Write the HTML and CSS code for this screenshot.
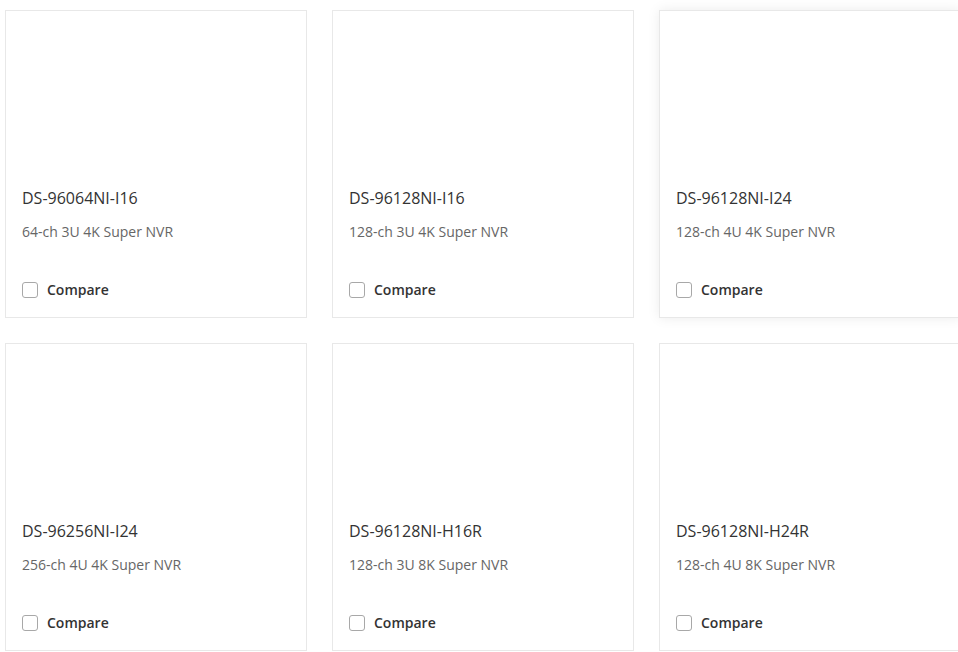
FILE: index.html
```html
<!DOCTYPE html>
<html lang="en">
<head>
  <meta charset="UTF-8" />
  <meta name="viewport" content="width=device-width, initial-scale=1.0" />
  <title>Network Video Recorders</title>
  <link rel="stylesheet" href="styles.css">
</head>
<body>

  <!-- Product list -->
  <section class="product-list">
    <div class="product-card">
      <div class="product-media"></div>
      <div class="product-body">
        <h3 class="product-name">DS-96064NI-I16</h3>
        <p class="product-desc">64-ch 3U 4K Super NVR</p>
        <label class="compare"><input type="checkbox"><span>Compare</span></label>
      </div>
    </div>

    <div class="product-card">
      <div class="product-media"></div>
      <div class="product-body">
        <h3 class="product-name">DS-96128NI-I16</h3>
        <p class="product-desc">128-ch 3U 4K Super NVR</p>
        <label class="compare"><input type="checkbox"><span>Compare</span></label>
      </div>
    </div>

    <div class="product-card is-hover">
      <div class="product-media"></div>
      <div class="product-body">
        <h3 class="product-name">DS-96128NI-I24</h3>
        <p class="product-desc">128-ch 4U 4K Super NVR</p>
        <label class="compare"><input type="checkbox"><span>Compare</span></label>
      </div>
    </div>

    <div class="product-card">
      <div class="product-media"></div>
      <div class="product-body">
        <h3 class="product-name">DS-96256NI-I24</h3>
        <p class="product-desc">256-ch 4U 4K Super NVR</p>
        <label class="compare"><input type="checkbox"><span>Compare</span></label>
      </div>
    </div>

    <div class="product-card">
      <div class="product-media"></div>
      <div class="product-body">
        <h3 class="product-name">DS-96128NI-H16R</h3>
        <p class="product-desc">128-ch 3U 8K Super NVR</p>
        <label class="compare"><input type="checkbox"><span>Compare</span></label>
      </div>
    </div>

    <div class="product-card">
      <div class="product-media"></div>
      <div class="product-body">
        <h3 class="product-name">DS-96128NI-H24R</h3>
        <p class="product-desc">128-ch 4U 8K Super NVR</p>
        <label class="compare"><input type="checkbox"><span>Compare</span></label>
      </div>
    </div>
  </section>

</body>
</html>
```

FILE: styles.css
```css
* {
  margin: 0;
  padding: 0;
  box-sizing: border-box;
}

body {
  background: #fff;
  color: #333;
  font-family: 'Open Sans', 'Liberation Sans', sans-serif;
  overflow: hidden;
}

/* ========== Product grid ========== */
.product-list {
  display: grid;
  grid-template-columns: repeat(3, 302px);
  grid-auto-rows: 308px;
  column-gap: 25px;
  row-gap: 25px;
  padding: 10px 0 0 5px;
}

.product-card {
  display: flex;
  flex-direction: column;
  background: #fff;
  border: 1px solid #e8e8e8;
  transition: box-shadow 0.3s;
}

.product-card:hover,
.product-card.is-hover {
  box-shadow: 0 0 12px rgba(0, 0, 0, 0.08);
}

.product-media {
  height: 160px;
}

.product-body {
  flex: 1;
  display: flex;
  flex-direction: column;
  padding: 16px 16px 17px;
}

.product-name {
  font-size: 16px;
  font-weight: 500;
  line-height: 22px;
  color: #333;
}

.product-desc {
  margin-top: 13px;
  font-size: 14px;
  line-height: 20px;
  color: #666;
}

/* ========== Compare checkbox ========== */
.compare {
  margin-top: auto;
  display: flex;
  align-items: center;
  gap: 9px;
  font-size: 14px;
  font-weight: 600;
  line-height: 20px;
  color: #333;
  cursor: pointer;
}

.compare input {
  appearance: none;
  width: 16px;
  height: 16px;
  border: 1px solid #a8a8a8;
  border-radius: 3px;
  background: #fff;
  cursor: pointer;
}
```
